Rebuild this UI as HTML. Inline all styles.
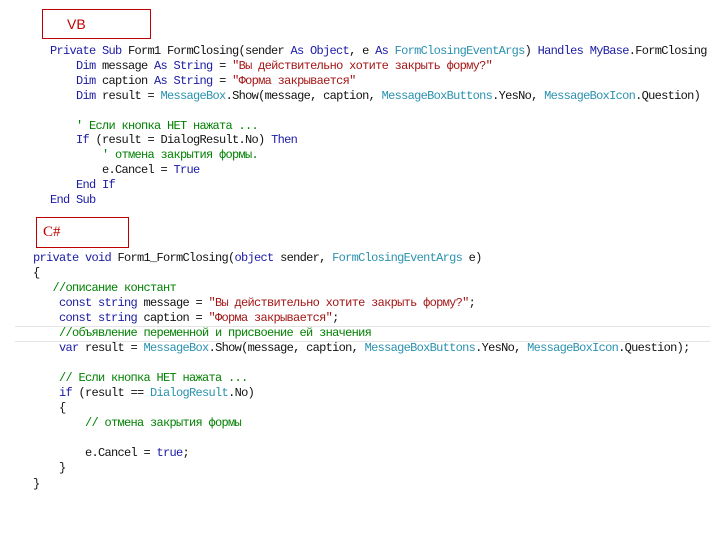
<!DOCTYPE html>
<html><head><meta charset="utf-8"><style>
body{margin:0;width:720px;height:540px;background:#fff;position:relative;overflow:hidden;}
.l{position:absolute;margin:0;white-space:pre;font-family:"Liberation Mono","DejaVu Sans Mono",monospace;font-size:12px;letter-spacing:-0.7px;line-height:14px;color:#111;}
.k{color:#1a1aa6}.s{color:#a31515}.c{color:#008000}.t{color:#2b91af}
.box{position:absolute;border:1px solid #c00000;color:#c00000;}
</style></head><body>
<div class="box" style="left:42px;top:9px;width:107px;height:28px;font-family:'Liberation Sans',sans-serif;font-size:14px;"><span style="position:absolute;left:24px;top:6px">VB</span></div>
<div class="box" style="left:36px;top:217px;width:91px;height:29px;font-family:'Liberation Serif',serif;font-size:15px;"><span style="position:absolute;left:6px;top:6px">C#</span></div>

<pre class="l" style="left:50px;top:44px"><span class="k">Private Sub</span> Form1 FormClosing(sender <span class="k">As Object</span>, e <span class="k">As</span> <span class="t">FormClosingEventArgs</span>) <span class="k">Handles</span> <span class="k">MyBase</span>.FormClosing</pre>
<pre class="l" style="left:50px;top:59px">    <span class="k">Dim</span> message <span class="k">As String</span> = <span class="s">"Вы действительно хотите закрыть форму?"</span></pre>
<pre class="l" style="left:50px;top:74px">    <span class="k">Dim</span> caption <span class="k">As String</span> = <span class="s">"Форма закрывается"</span></pre>
<pre class="l" style="left:50px;top:89px">    <span class="k">Dim</span> result = <span class="t">MessageBox</span>.Show(message, caption, <span class="t">MessageBoxButtons</span>.YesNo, <span class="t">MessageBoxIcon</span>.Question)</pre>
<pre class="l" style="left:50px;top:119px">    <span class="c">' Если кнопка НЕТ нажата ...</span></pre>
<pre class="l" style="left:50px;top:133px">    <span class="k">If</span> (result = DialogResult.No) <span class="k">Then</span></pre>
<pre class="l" style="left:50px;top:148px">        <span class="c">' отмена закрытия формы.</span></pre>
<pre class="l" style="left:50px;top:163px">        e.Cancel = <span class="k">True</span></pre>
<pre class="l" style="left:50px;top:178px">    <span class="k">End If</span></pre>
<pre class="l" style="left:50px;top:193px"><span class="k">End Sub</span></pre>

<div style="position:absolute;left:15px;top:326px;width:695px;height:1px;background:#e4e4e4"></div>
<div style="position:absolute;left:15px;top:341px;width:695px;height:1px;background:#e4e4e4"></div>

<pre class="l" style="left:33px;top:251px"><span class="k">private void</span> Form1_FormClosing(<span class="k">object</span> sender, <span class="t">FormClosingEventArgs</span> e)</pre>
<pre class="l" style="left:33px;top:266px">{</pre>
<pre class="l" style="left:33px;top:281px">   <span class="c">//описание констант</span></pre>
<pre class="l" style="left:33px;top:296px">    <span class="k">const string</span> message = <span class="s">"Вы действительно хотите закрыть форму?"</span>;</pre>
<pre class="l" style="left:33px;top:311px">    <span class="k">const string</span> caption = <span class="s">"Форма закрывается"</span>;</pre>
<pre class="l" style="left:33px;top:326px">    <span class="c">//объявление переменной и присвоение ей значения</span></pre>
<pre class="l" style="left:33px;top:341px">    <span class="k">var</span> result = <span class="t">MessageBox</span>.Show(message, caption, <span class="t">MessageBoxButtons</span>.YesNo, <span class="t">MessageBoxIcon</span>.Question);</pre>
<pre class="l" style="left:33px;top:371px">    <span class="c">// Если кнопка НЕТ нажата ...</span></pre>
<pre class="l" style="left:33px;top:386px">    <span class="k">if</span> (result == <span class="t">DialogResult</span>.No)</pre>
<pre class="l" style="left:33px;top:401px">    {</pre>
<pre class="l" style="left:33px;top:416px">        <span class="c">// отмена закрытия формы</span></pre>
<pre class="l" style="left:33px;top:446px">        e.Cancel = <span class="k">true</span>;</pre>
<pre class="l" style="left:33px;top:461px">    }</pre>
<pre class="l" style="left:33px;top:477px">}</pre>
</body></html>
